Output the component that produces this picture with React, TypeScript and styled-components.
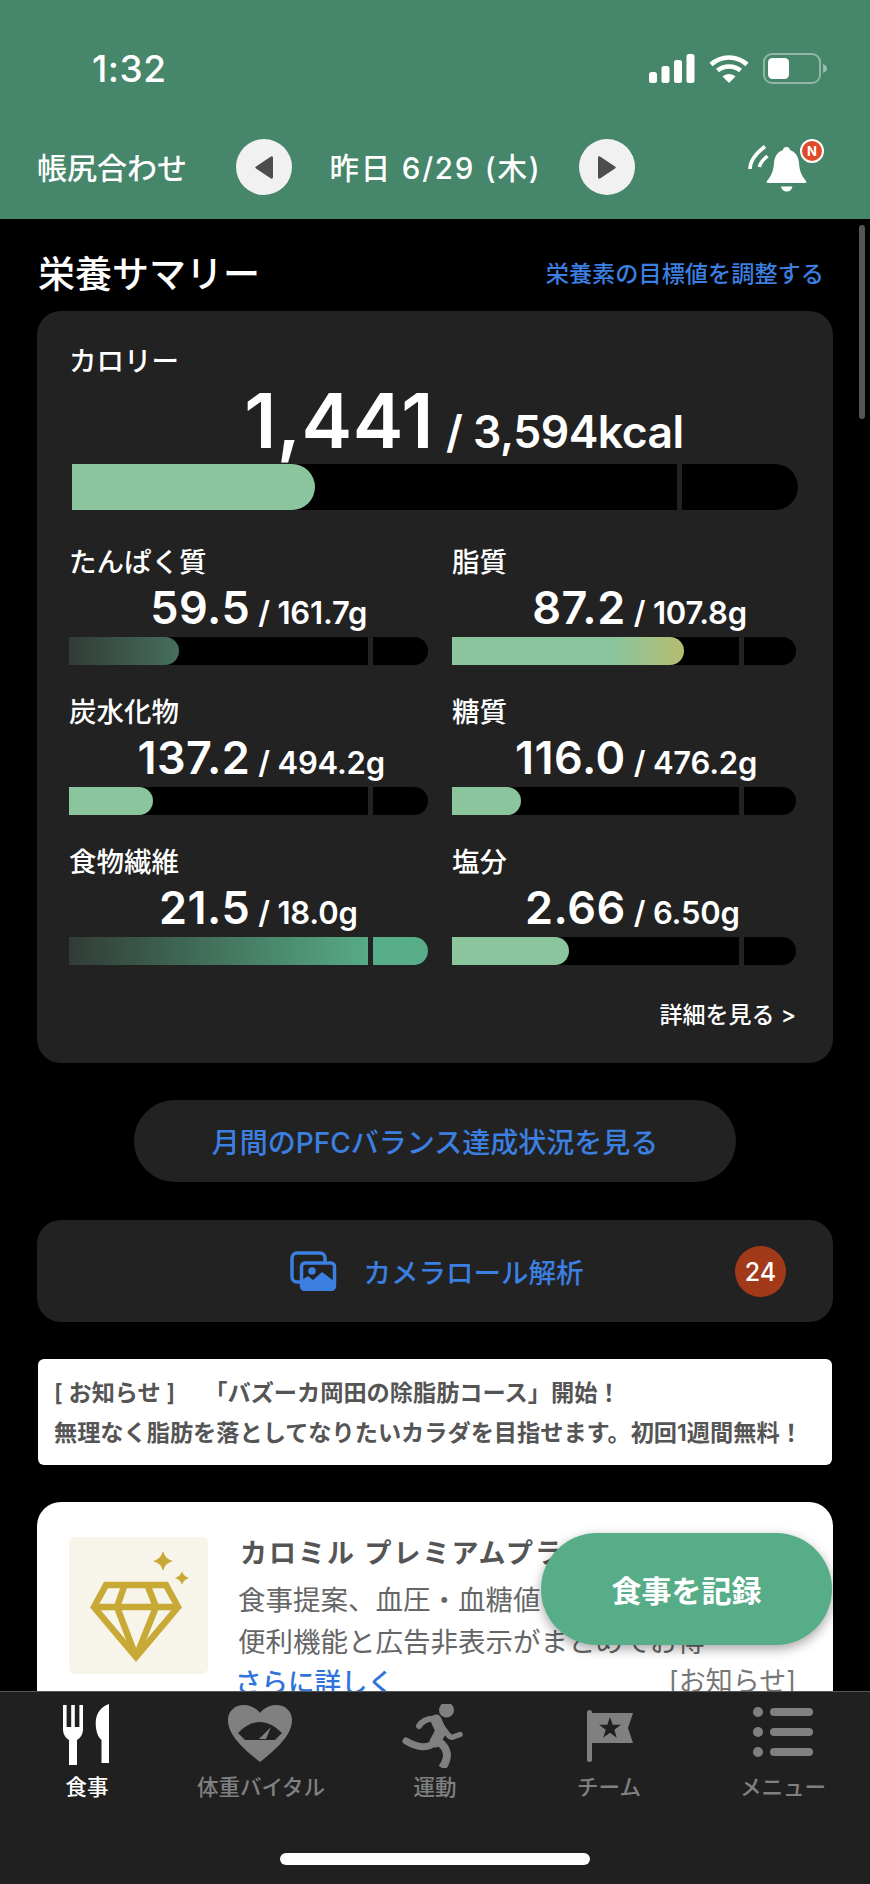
import React from 'react';
import styled, { createGlobalStyle } from 'styled-components';

const FONT = `Inter, "Noto Sans CJK JP", sans-serif`;

const nutrients = [
  { name: 'たんぱく質', value: '59.5', target: '/ 161.7g', width: 30.6, tone: 'low' },
  { name: '脂質', value: '87.2', target: '/ 107.8g', width: 67.4, tone: 'warn' },
  { name: '炭水化物', value: '137.2', target: '/ 494.2g', width: 23.4, tone: 'plain' },
  { name: '糖質', value: '116.0', target: '/ 476.2g', width: 20, tone: 'plain' },
  { name: '食物繊維', value: '21.5', target: '/ 18.0g', width: 100, tone: 'full' },
  { name: '塩分', value: '2.66', target: '/ 6.50g', width: 34, tone: 'plain' },
];

const tabs = [
  { label: '食事', icon: <ForkIcon /> },
  { label: '体重バイタル', icon: <HeartIcon /> },
  { label: '運動', icon: <RunnerIcon /> },
  { label: 'チーム', icon: <FlagIcon /> },
  { label: 'メニュー', icon: <MenuIcon /> },
];

function ForkIcon() {
  return (
    <svg width="88" height="64" viewBox="0 0 88 64" fill="currentColor">
      <path d="M20 1h3.6v22h4.6V1h3.6v22h4.6V1H40v24c0 6-3 9-6 11v25h-8V36c-3-2-6-5-6-11z" />
      <path d="M66 0v59h-7.5V36C55 33 52.700 27 52.700 19 52.700 9 59 2 66 0z" />
    </svg>
  );
}

function HeartIcon() {
  return (
    <svg width="88" height="64" viewBox="0 0 88 64" fill="currentColor">
      <path d="M43 58C20 40 11 28 11 16 11 7 18 1 27 1c7 0 13 4 16 8 3-4 9-8 16-8 9 0 16 6 16 15 0 12-9 24-32 42z" />
      <path d="M21 29Q43 7 65 29l-7 7H28z" fill="#202020" />
      <path d="M54 23 42 35h7z" />
    </svg>
  );
}

function RunnerIcon() {
  return (
    <svg width="88" height="64" viewBox="1 9 88 64" fill="none" stroke="currentColor" strokeLinecap="round" strokeLinejoin="round">
      <circle cx="56.500" cy="15" r="7.500" fill="currentColor" stroke="none" />
      <path d="M29 31C33 25 38 23 46 24" strokeWidth="6" />
      <path d="M46 25 51 36 45 47" strokeWidth="11" />
      <path d="M53 33C58 40 60 43 63 42L70 39.500" strokeWidth="5.500" />
      <path d="M44 47C39 54 28 53 16 46" strokeWidth="7" />
      <path d="M48 46C58 53 60 62 52 73" strokeWidth="8" strokeLinecap="butt" />
    </svg>
  );
}

function FlagIcon() {
  return (
    <svg width="88" height="64" viewBox="0 0 88 64" fill="currentColor">
      <rect x="22" y="6" width="5" height="52" rx="2.500" />
      <path d="M25 9h43l-5 15 5 15H25z" />
      <path d="M45 13l2.700 7.800H56l-6.700 4.900 2.500 8-6.800-4.900-6.800 4.900 2.500-8L34 20.800h8.300z" fill="#202020" />
    </svg>
  );
}

function MenuIcon() {
  return (
    <svg width="88" height="64" viewBox="0 0 88 64" fill="currentColor">
      <circle cx="19" cy="8" r="5" />
      <circle cx="19" cy="28" r="5" />
      <circle cx="19" cy="48" r="5" />
      <rect x="31" y="4" width="43" height="8" rx="4" />
      <rect x="31" y="24" width="43" height="8" rx="4" />
      <rect x="31" y="44" width="43" height="8" rx="4" />
    </svg>
  );
}

function Diamond() {
  return (
    <svg width="139" height="137" viewBox="9 7 139 137" fill="none" stroke="#c8a935" strokeWidth="6.500" strokeLinejoin="miter">
      <path d="M46 55h60l12 22-42 50-42-50z" />
      <path d="M34 77h84M65 54l-8 23 19 50M87 54l9 23-20 50" />
      <path d="M103 21q2 8 10 10-8 2-10 10-2-8-10-10 8-2 10-10z" fill="#c8a935" stroke="none" />
      <path d="M122 41q1 5 7 7-6 2-7 7-1-5-7-7 6-2 7-7z" fill="#c8a935" stroke="none" />
    </svg>
  );
}

function PhotosIcon() {
  return (
    <svg width="47" height="40" viewBox="11 11 47 40" fill="none" stroke="#3b7fe0" strokeWidth="3.500">
      <rect x="13" y="13" width="33" height="29" rx="5" />
      <rect x="22.500" y="23" width="33" height="26.500" rx="3.500" fill="#222" />
      <circle cx="33" cy="31" r="3.800" fill="#3b7fe0" stroke="none" />
      <path d="M23 40l6-4 5 4 9-8 12 9v7c0 1-1 2-2 2H25c-1 0-2-1-2-2z" fill="#3b7fe0" stroke="none" />
    </svg>
  );
}

const GlobalStyle = createGlobalStyle`
  html, body {
    margin: 0;
    padding: 0;
    background: #000;
  }
  * {
    box-sizing: border-box;
  }
`;

const Screen = styled.div`
  position: relative;
  display: flex;
  flex-direction: column;
  width: 870px;
  height: 1884px;
  overflow: hidden;
  background: #000;
  color: #fff;
  font-family: ${FONT};
`;

const Header = styled.header`
  flex: none;
  height: 219px;
  padding-top: 40px;
  background: #46866a;
`;

const StatusBar = styled.div`
  display: flex;
  align-items: center;
  justify-content: space-between;
  height: 56px;
  padding: 0 43px 0 92px;
`;

const Time = styled.span`
  font-size: 37px;
  font-weight: 500;
  letter-spacing: 0.5px;
`;

const StatusIcons = styled.div`
  display: flex;
  align-items: center;
  gap: 14px;
`;

const NavRow = styled.div`
  display: flex;
  align-items: center;
  height: 56px;
  margin-top: 43px;
  padding-left: 37px;
`;

const NavTitle = styled.span`
  width: 199px;
  padding-bottom: 3px;
  font-size: 30px;
  font-weight: 500;
  white-space: nowrap;
`;

const RoundButton = styled.button`
  display: flex;
  align-items: center;
  justify-content: center;
  width: 56px;
  height: 56px;
  padding: 0;
  border: 0;
  border-radius: 50%;
  background: #f1f1f1;
`;

const DateLabel = styled.span`
  width: 287px;
  padding-bottom: 3px;
  font-size: 29.500px;
  font-weight: 500;
  letter-spacing: 1.800px;
  text-align: center;
  white-space: nowrap;
`;

const BellWrap = styled.div`
  position: relative;
  margin: 2px 0 0 110px;
  width: 65px;
  height: 54px;
`;

const BellBadge = styled.span`
  position: absolute;
  left: 55px;
  top: -2px;
  display: flex;
  align-items: center;
  justify-content: center;
  width: 24px;
  height: 24px;
  border: 2px solid #fff;
  border-radius: 50%;
  background: #e0492a;
  font-size: 13px;
  font-weight: 700;
`;

const Main = styled.main`
  flex: 1;
  min-height: 0;
  overflow: hidden;
  padding: 34px 37px 0;
`;

const TitleRow = styled.div`
  display: flex;
  align-items: center;
  justify-content: space-between;
  height: 42px;
  padding: 0 9px 4px 1px;
`;

const Title = styled.h1`
  margin: 0;
  font-size: 37px;
  font-weight: 500;
`;

const TitleLink = styled.a`
  font-size: 23.200px;
  font-weight: 500;
  color: #3b7fe0;
`;

const Card = styled.section`
  margin-top: 16px;
  padding: 36px 37px 34px 32px;
  border-radius: 24px;
  background: #222;
`;

const NutrientLabel = styled.div`
  height: 30px;
  font-size: 27.500px;
  font-weight: 500;
  line-height: 28px;
`;

const ValueRow = styled.div<{ $big?: boolean }>`
  display: grid;
  grid-template-columns: ${(p) => (p.$big ? '50%' : '50.500%')} 1fr;
  column-gap: ${(p) => (p.$big ? 12 : 8)}px;
  align-items: baseline;
  height: ${(p) => (p.$big ? 87 : 59)}px;
  line-height: ${(p) => (p.$big ? 87 : 59)}px;
  ${(p) => p.$big && 'padding-left: 3px;'}
`;

const Amount = styled.span<{ $big?: boolean }>`
  font-size: ${(p) => (p.$big ? 76 : 45)}px;
  font-weight: 600;
  letter-spacing: 0.500px;
  text-align: right;
`;

const Target = styled.span<{ $big?: boolean }>`
  font-size: ${(p) => (p.$big ? 44.500 : 31)}px;
  font-weight: 600;
  letter-spacing: ${(p) => (p.$big ? -0.500 : -0.200)}px;
  white-space: nowrap;
`;

const Track = styled.div<{ $big?: boolean }>`
  position: relative;
  height: ${(p) => (p.$big ? 46 : 28)}px;
  ${(p) => p.$big && 'margin: 0 -2px 0 3px;'}
  border-radius: 0 ${(p) => (p.$big ? 23 : 14)}px ${(p) => (p.$big ? 23 : 14)}px 0;
  background: #000;
`;

const fills: Record<string, string> = {
  plain: '#8bc59d',
  low: 'linear-gradient(90deg, #313c36, #466f5c)',
  warn: 'linear-gradient(90deg, #8bc59d 70%, #b6bd70)',
  full: 'linear-gradient(90deg, #313c36, #57ad87 85%)',
};

const Fill = styled.div<{ $tone: string; $big?: boolean }>`
  height: 100%;
  border-radius: 0 ${(p) => (p.$big ? 23 : 14)}px ${(p) => (p.$big ? 23 : 14)}px 0;
  background: ${(p) => fills[p.$tone]};
`;

const Divider = styled.span`
  position: absolute;
  top: 0;
  bottom: 0;
  left: 83.400%;
  width: 5px;
  background: #222;
`;

const NutrientGrid = styled.div`
  display: grid;
  grid-template-columns: 359px 344px;
  column-gap: 24px;
  row-gap: 33px;
  margin-top: 38px;
`;

const DetailLink = styled.a`
  display: block;
  margin-top: 36px;
  font-size: 23px;
  font-weight: 500;
  line-height: 28px;
  text-align: right;
`;

const PillButton = styled.button`
  display: block;
  width: 602px;
  height: 82px;
  margin: 37px auto 0;
  padding: 0;
  border: 0;
  border-radius: 41px;
  background: #222;
  color: #3b7fe0;
  font-family: ${FONT};
  font-size: 28px;
  font-weight: 500;
`;

const CameraRow = styled.div`
  position: relative;
  display: flex;
  align-items: center;
  justify-content: center;
  gap: 27px;
  height: 102px;
  margin-top: 38px;
  padding-left: 3px;
  border-radius: 24px;
  background: #222;
  color: #3b7fe0;
  font-size: 27.500px;
  font-weight: 500;
`;

const CountBadge = styled.span`
  position: absolute;
  top: 26px;
  right: 47px;
  display: flex;
  align-items: center;
  justify-content: center;
  width: 51px;
  height: 51px;
  border-radius: 50%;
  background: #a23a1a;
  color: #fff;
  font-size: 25px;
`;

const Notice = styled.div`
  height: 106px;
  margin: 37px 1px 0;
  padding: 14px 0 0 16px;
  border-radius: 6px;
  background: #fff;
  color: #555;
  font-size: 23.200px;
  font-weight: 600;
  line-height: 40px;
  white-space: pre;
`;

const PlanCard = styled.section`
  display: flex;
  gap: 31px;
  height: 260px;
  margin-top: 37px;
  padding: 35px 37px 0 32px;
  border-radius: 24px 24px 0 0;
  background: #fff;
`;

const PlanThumb = styled.div`
  flex: none;
  width: 139px;
  height: 137px;
  border-radius: 6px;
  background: #f7f5ea;
`;

const PlanBody = styled.div`
  flex: 1;
  min-width: 0;
  white-space: nowrap;
`;

const PlanTitle = styled.div`
  margin-left: 1px;
  font-size: 27px;
  font-weight: 700;
  letter-spacing: 2px;
  line-height: 34px;
  color: #555;
`;

const PlanText = styled.div`
  margin: 8px 0 0 -1px;
  font-size: 27.500px;
  line-height: 42px;
  color: #666;
`;

const PlanFoot = styled.div`
  display: flex;
  justify-content: space-between;
  margin: -2px 0 0 -4px;
  line-height: 42px;
`;

const PlanMore = styled.a`
  font-size: 26.500px;
  font-weight: 500;
  color: #2f74d9;
`;

const PlanTag = styled.span`
  font-size: 27px;
  color: #777;
`;

const RecordButton = styled.button`
  position: absolute;
  left: 541px;
  top: 1533px;
  width: 291px;
  height: 112px;
  padding: 0;
  border: 0;
  border-radius: 56px;
  background: #57ad87;
  box-shadow: 0 4px 12px rgba(0, 0, 0, 0.35);
  color: #fff;
  font-family: ${FONT};
  font-size: 30px;
  font-weight: 600;
`;

const ScrollThumb = styled.span`
  position: absolute;
  top: 225px;
  right: 5px;
  width: 6px;
  height: 194px;
  border-radius: 3px;
  background: #555;
`;

const TabBar = styled.nav`
  flex: none;
  height: 193px;
  padding-top: 12px;
  border-top: 1px solid #555;
  background: #202020;
`;

const TabList = styled.div`
  display: grid;
  grid-template-columns: repeat(5, 174px);
`;

const Tab = styled.div<{ $active?: boolean }>`
  display: flex;
  flex-direction: column;
  align-items: center;
  gap: 6px;
  color: ${(p) => (p.$active ? '#fff' : '#808080')};
  font-size: 21.500px;
  font-weight: 500;
  line-height: 26px;
  white-space: nowrap;
`;

const HomeBar = styled.div`
  width: 310px;
  height: 12px;
  margin: 53px auto 0;
  border-radius: 6px;
  background: #fff;
`;

const App = () => {
  return (
    <Screen>
      <GlobalStyle />
      <Header>
        <StatusBar>
          <Time>1:32</Time>
          <StatusIcons>
            <svg width="46" height="29" viewBox="0 0 46 29" fill="#fff">
              <rect x="0" y="18" width="8" height="11" rx="2.500" />
              <rect x="12.500" y="12" width="8" height="17" rx="2.500" />
              <rect x="25" y="6" width="8" height="23" rx="2.500" />
              <rect x="37.500" y="0" width="8" height="29" rx="2.500" />
            </svg>
            <svg width="40" height="29" viewBox="0 0 40 29" fill="none" stroke="#fff" strokeWidth="4.500">
              <path d="M2 10.500C12 1 28 1 38 10.500" />
              <path d="M8.500 16.500C14.500 11 25.500 11 31.500 16.500" />
              <path d="M20 29 13.500 22.500C17 19 23 19 26.500 22.500z" fill="#fff" stroke="none" />
            </svg>
            <svg width="64" height="31" viewBox="0 0 64 31" fill="none">
              <rect x="1" y="1" width="56" height="29" rx="8" stroke="#fff" strokeOpacity="0.4" strokeWidth="2" />
              <rect x="5" y="5" width="21" height="21" rx="4.500" fill="#fff" />
              <path d="M60 11c3 1 4 3 4 4.500S63 19 60 20z" fill="#fff" fillOpacity="0.45" />
            </svg>
          </StatusIcons>
        </StatusBar>
        <NavRow>
          <NavTitle>帳尻合わせ</NavTitle>
          <RoundButton aria-label="前の日">
            <svg width="18" height="25" viewBox="0 0 18 25" fill="#4d4d4d">
              <path d="M16 1.500c1 -.5 2 0 2 1.500v19c0 1.500-1 2-2 1.500L1 13.500c-1-.5-1-1.500 0-2z" />
            </svg>
          </RoundButton>
          <DateLabel>昨日 6/29 (木)</DateLabel>
          <RoundButton aria-label="次の日">
            <svg width="18" height="25" viewBox="0 0 18 25" fill="#4d4d4d">
              <path d="M2 1.500C1 1 0 1.500 0 3v19c0 1.500 1 2 2 1.500l15-10c1-.5 1-1.500 0-2z" />
            </svg>
          </RoundButton>
          <BellWrap>
            <svg width="65" height="54" viewBox="125 112 65 54" fill="#fff">
              <path d="M166.700 118c2 0 3.300 1.500 3.300 3 6 2 8.500 7 9 13 .5 7 2 12 7 18 .7 1 .3 2-1 2h-37c-1.300 0-1.700-1-1-2 5-6 6.500-11 7-18 .5-6 3-11 9-13 0-1.500 1.300-3 3.700-3z" />
              <path d="M161 157.500h11.500c-.5 3-3 5-5.700 5s-5.300-2-5.800-5z" />
              <path d="M130 140c0-8 5-15 15-22.500M139.500 138c.5-4 3-7 8-11" fill="none" stroke="#fff" strokeWidth="3.500" />
            </svg>
            <BellBadge>N</BellBadge>
          </BellWrap>
        </NavRow>
      </Header>
      <Main>
        <TitleRow>
          <Title>栄養サマリー</Title>
          <TitleLink>栄養素の目標値を調整する</TitleLink>
        </TitleRow>
        <Card>
          <NutrientLabel>カロリー</NutrientLabel>
          <ValueRow $big>
            <Amount $big>1,441</Amount>
            <Target $big>/ 3,594kcal</Target>
          </ValueRow>
          <Track $big>
            <Fill $big $tone="plain" style={{ width: '33.500%' }} />
            <Divider />
          </Track>
          <NutrientGrid>
            {nutrients.map((n) => (
              <div key={n.name}>
                <NutrientLabel>{n.name}</NutrientLabel>
                <ValueRow>
                  <Amount>{n.value}</Amount>
                  <Target>{n.target}</Target>
                </ValueRow>
                <Track>
                  <Fill $tone={n.tone} style={{ width: `${n.width}%` }} />
                  <Divider />
                </Track>
              </div>
            ))}
          </NutrientGrid>
          <DetailLink>詳細を見る &gt;</DetailLink>
        </Card>
        <PillButton>月間のPFCバランス達成状況を見る</PillButton>
        <CameraRow>
          <PhotosIcon />
          <span>カメラロール解析</span>
          <CountBadge>24</CountBadge>
        </CameraRow>
        <Notice>
          {'[ お知らせ ]　 「バズーカ岡田の除脂肪コース」開始！\n無理なく脂肪を落としてなりたいカラダを目指せます。初回1週間無料！'}
        </Notice>
        <PlanCard>
          <PlanThumb>
            <Diamond />
          </PlanThumb>
          <PlanBody>
            <PlanTitle>カロミル プレミアムプラン</PlanTitle>
            <PlanText>
              食事提案、血圧・血糖値の記録など
              <br />
              便利機能と広告非表示がまとめてお得
            </PlanText>
            <PlanFoot>
              <PlanMore>さらに詳しく</PlanMore>
              <PlanTag>[お知らせ]</PlanTag>
            </PlanFoot>
          </PlanBody>
        </PlanCard>
      </Main>
      <TabBar>
        <TabList>
          {tabs.map((t, i) => (
            <Tab key={t.label} $active={i === 0}>
              {t.icon}
              {t.label}
            </Tab>
          ))}
        </TabList>
        <HomeBar />
      </TabBar>
      <RecordButton>食事を記録</RecordButton>
      <ScrollThumb />
    </Screen>
  );
};

export default App;
